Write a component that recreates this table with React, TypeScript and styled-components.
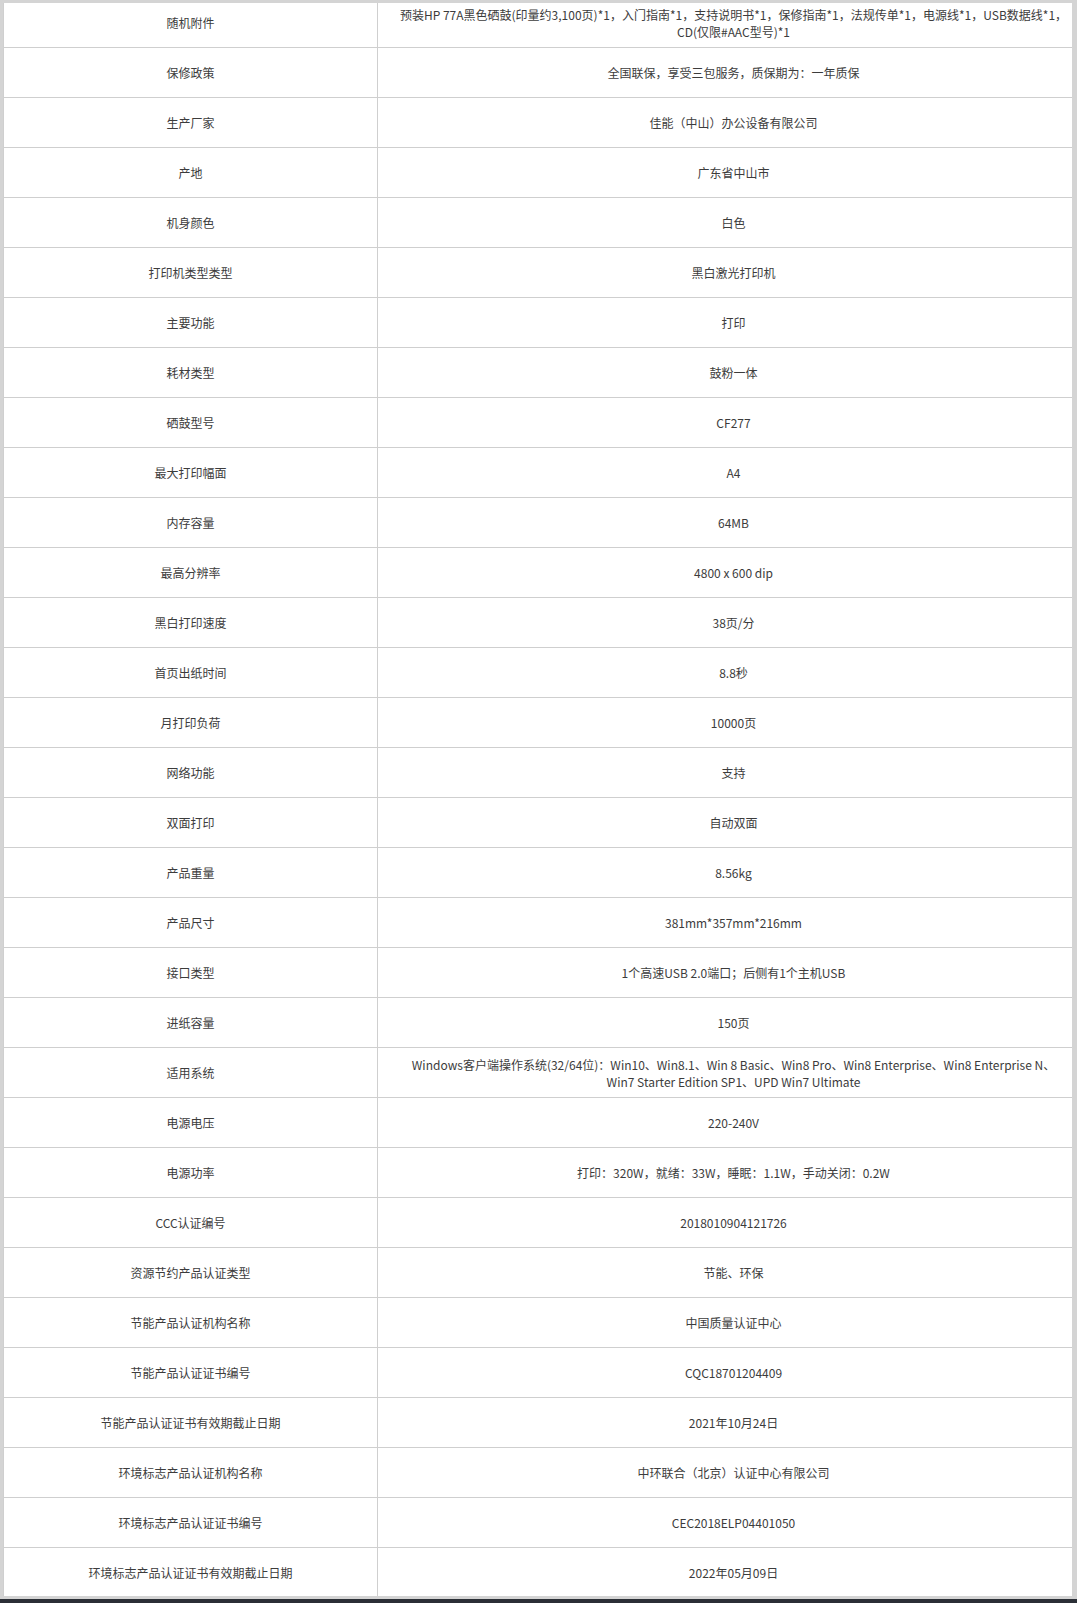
import React from "react";
import styled, { createGlobalStyle } from "styled-components";

const GlobalStyle = createGlobalStyle`
  html, body {
    margin: 0;
    padding: 0;
    background: #2b2f36;
  }
  body {
    font-family: "Noto Sans CJK SC", "Noto Sans", sans-serif;
  }
`;

const Frame = styled.div`
  box-sizing: border-box;
  height: 1599px;
  padding: 3px 5px 3px 3px;
  background: #d4d4d4;
`;

const Viewport = styled.div`
  height: 100%;
  overflow: hidden;
  background: #ffffff;
`;

const SpecTable = styled.table`
  width: 1087px;
  margin-top: -6px;
  border-collapse: collapse;
  table-layout: fixed;
  background: #ffffff;
  font-family: "Noto Sans CJK SC", "Noto Sans", sans-serif;
  font-size: 12px;
  line-height: 17px;
  color: #3c3c3c;
`;

const Row = styled.tr`
  height: 50px;
`;

const Cell = styled.td`
  border: 1px solid #cfcfcf;
  text-align: center;
  vertical-align: middle;
  padding: 0 20px;
  box-sizing: border-box;
`;

const LabelCell = styled(Cell)`
  width: 374px;
`;

const ValueCell = styled(Cell)``;

type Spec = [string, string];

const specs: Spec[] = [
  [
    "随机附件",
    "预装HP 77A黑色硒鼓(印量约3,100页)*1，入门指南*1，支持说明书*1，保修指南*1，法规传单*1，电源线*1，USB数据线*1，CD(仅限#AAC型号)*1",
  ],
  ["保修政策", "全国联保，享受三包服务，质保期为：一年质保"],
  ["生产厂家", "佳能（中山）办公设备有限公司"],
  ["产地", "广东省中山市"],
  ["机身颜色", "白色"],
  ["打印机类型类型", "黑白激光打印机"],
  ["主要功能", "打印"],
  ["耗材类型", "鼓粉一体"],
  ["硒鼓型号", "CF277"],
  ["最大打印幅面", "A4"],
  ["内存容量", "64MB"],
  ["最高分辨率", "4800 x 600 dip"],
  ["黑白打印速度", "38页/分"],
  ["首页出纸时间", "8.8秒"],
  ["月打印负荷", "10000页"],
  ["网络功能", "支持"],
  ["双面打印", "自动双面"],
  ["产品重量", "8.56kg"],
  ["产品尺寸", "381mm*357mm*216mm"],
  ["接口类型", "1个高速USB 2.0端口；后侧有1个主机USB"],
  ["进纸容量", "150页"],
  [
    "适用系统",
    "Windows客户端操作系统(32/64位)：Win10、Win8.1、Win 8 Basic、Win8 Pro、Win8 Enterprise、Win8 Enterprise N、Win7 Starter Edition SP1、UPD Win7 Ultimate",
  ],
  ["电源电压", "220-240V"],
  ["电源功率", "打印：320W，就绪：33W，睡眠：1.1W，手动关闭：0.2W"],
  ["CCC认证编号", "2018010904121726"],
  ["资源节约产品认证类型", "节能、环保"],
  ["节能产品认证机构名称", "中国质量认证中心"],
  ["节能产品认证证书编号", "CQC18701204409"],
  ["节能产品认证证书有效期截止日期", "2021年10月24日"],
  ["环境标志产品认证机构名称", "中环联合（北京）认证中心有限公司"],
  ["环境标志产品认证证书编号", "CEC2018ELP04401050"],
  ["环境标志产品认证证书有效期截止日期", "2022年05月09日"],
];

export default function App() {
  return (
    <>
      <GlobalStyle />
      <Frame>
        <Viewport>
          <SpecTable>
            <tbody>
              {specs.map(([label, value]) => (
                <Row key={label}>
                  <LabelCell>{label}</LabelCell>
                  <ValueCell>{value}</ValueCell>
                </Row>
              ))}
            </tbody>
          </SpecTable>
        </Viewport>
      </Frame>
    </>
  );
}
